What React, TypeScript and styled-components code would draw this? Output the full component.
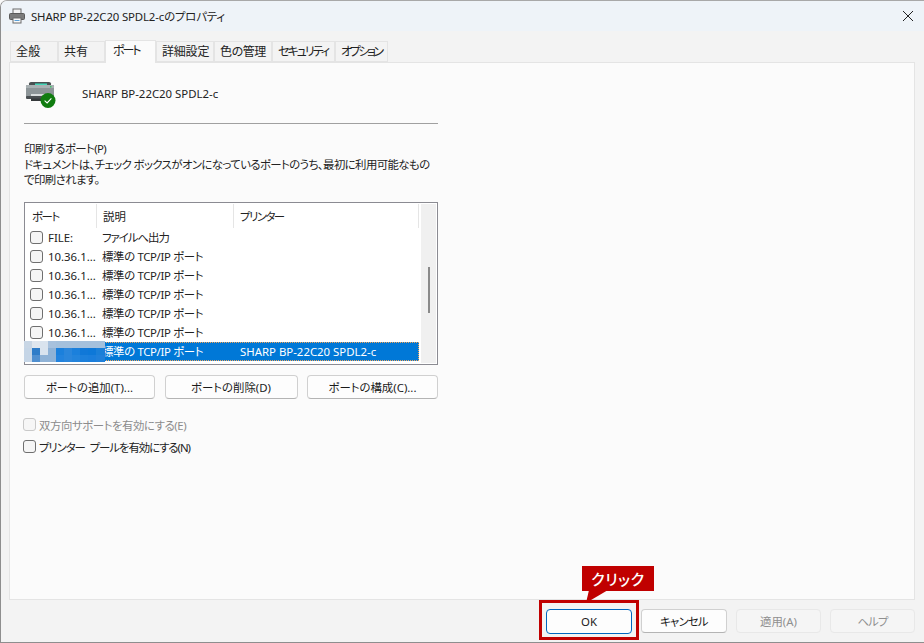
import React from "react";
import styled, { createGlobalStyle } from "styled-components";

const Global = createGlobalStyle`
  html, body { margin: 0; padding: 0; background: #f9f9f9; }
  * { box-sizing: border-box; }
  body {
    font-family: "Noto Sans", "Noto Sans CJK JP", sans-serif;
    font-size: 11.4px;
    color: #1a1a1a;
    font-feature-settings: "palt" 1;
    white-space: nowrap;
  }
`;

const Window = styled.div`
  position: relative;
  width: 924px;
  height: 643px;
  display: flex;
  flex-direction: column;
  background: #f3f3f3;
  border-left: 1px solid #8e8e8e;
  border-bottom: 1px solid #8e8e8e;
  border-top: 1px solid #a8a8a8;
  border-radius: 7px 0 0 0;
  overflow: hidden;
`;
const TitleBar = styled.div`
  height: 30px;
  flex: none;
  display: flex;
  align-items: center;
  padding: 0 8px 1px 8px;
  gap: 6px;
  background: #eef3f8;
`;
const TitleText = styled.div`
  flex: 1;
  color: #222;
  letter-spacing: -0.14px;
`;
const CloseBtn = styled.div`
  width: 14px;
  height: 14px;
  margin-right: 1px;
  display: flex;
`;
const Body = styled.div`
  flex: 1;
  display: flex;
  flex-direction: column;
  padding: 9px 8px 0 8px;
  min-height: 0;
`;
const Tabs = styled.div`
  display: flex;
  align-items: flex-end;
  height: 22px;
  flex: none;
  padding-left: 1px;
  position: relative;
  z-index: 1;
`;
const Tab = styled.div<{ $active?: boolean; $w: number; $ls: number }>`
  width: ${(p) => p.$w}px;
  height: ${(p) => (p.$active ? 23 : 21)}px;
  margin-bottom: ${(p) => (p.$active ? -1 : 0)}px;
  display: flex;
  align-items: center;
  padding-left: ${(p) => (p.$active ? 7 : 5)}px;
  padding-bottom: ${(p) => (p.$active ? 5 : 1)}px;
  background: ${(p) => (p.$active ? "#fbfbfb" : "#f3f3f3")};
  border: 1px solid #e4e4e4;
  border-bottom: ${(p) => (p.$active ? "none" : "1px solid #e4e4e4")};
  color: #222;
  font-size: 12px;
  letter-spacing: ${(p) => p.$ls}px;
`;
const Panel = styled.div`
  height: 538px;
  flex: none;
  background: #fbfbfb;
  border: 1px solid #e4e4e4;
  padding: 14px 0 0 14px;
  width: 906px;
`;
const Content = styled.div`
  width: 414px;
  display: flex;
  flex-direction: column;
`;
const PrinterHead = styled.div`
  display: flex;
  align-items: center;
  height: 33px;
  gap: 25px;
  padding-left: 1px;
`;
const PrinterName = styled.div`
  color: #222;
  margin-top: -1px;
`;
const Rule = styled.div`
  height: 1px;
  background: #a0a0a0;
  margin-top: 13px;
`;
const Description = styled.div`
  margin-top: 17px;
  line-height: 15.5px;
  color: #222;
  white-space: pre;
  letter-spacing: -0.58px;
`;
const ListBox = styled.div`
  margin-top: 14px;
  height: 163px;
  border: 1px solid #8b8b92;
  padding: 1px;
  background: #fff;
  display: flex;
`;
const ListMain = styled.div`
  width: 393px;
  display: flex;
  flex-direction: column;
  flex: none;
`;
const ListHeader = styled.div`
  display: grid;
  grid-template-columns: 71px 137px 185px;
  height: 24px;
  flex: none;
`;
const HeadCell = styled.div<{ $ls?: number }>`
  display: flex;
  align-items: center;
  padding-left: 6px;
  border-right: 1px solid #e5e5e5;
  color: #222;
  letter-spacing: ${(p) => p.$ls ?? 0}px;
`;
const Rows = styled.div`
  display: flex;
  flex-direction: column;
`;
const Row = styled.div<{ $selected?: boolean }>`
  position: relative;
  display: grid;
  grid-template-columns: 70px 137px 185px;
  height: 19px;
  align-items: center;
  color: ${(p) => (p.$selected ? "#fff" : "#222")};
  background: ${(p) => (p.$selected ? "#0078d7" : "transparent")};
  outline: ${(p) => (p.$selected ? "1px dotted #f2a65a" : "none")};
  outline-offset: -1px;
`;
const PortCell = styled.div`
  display: flex;
  align-items: center;
  padding-left: 4px;
  gap: 5px;
`;
const DescCell = styled.div<{ $ls: number }>`
  padding-left: 6px;
  letter-spacing: ${(p) => p.$ls}px;
`;
const PrinterCell = styled.div`
  padding-left: 7px;
`;
const Check = styled.span<{ $disabled?: boolean }>`
  display: inline-block;
  width: 13px;
  height: 13px;
  flex: none;
  border-radius: 3px;
  background: ${(p) => (p.$disabled ? "#f6f6f6" : "#f5f5f5")};
  border: 1px solid ${(p) => (p.$disabled ? "#c9c9c9" : "#6f6f6f")};
`;
const Mosaic = styled.svg`
  position: absolute;
  left: -2px;
  top: -1px;
`;
const ScrollTrack = styled.div`
  flex: 1;
  margin-left: 2px;
  background: #f0f0f0;
  position: relative;
`;
const ScrollThumb = styled.div`
  position: absolute;
  left: 7px;
  top: 63px;
  width: 2px;
  height: 46px;
  background: #8a8a8a;
`;
const ActionRow = styled.div`
  display: flex;
  justify-content: space-between;
  margin-top: 10px;
`;
const Button = styled.div<{ $w: number; $primary?: boolean; $disabled?: boolean; $ls?: number }>`
  width: ${(p) => p.$w}px;
  height: ${(p) => (p.$primary ? 25 : 24)}px;
  flex: none;
  display: flex;
  align-items: center;
  justify-content: center;
  border-radius: 4px;
  color: ${(p) => (p.$disabled ? "#8f8f8f" : "#1a1a1a")};
  background: ${(p) => (p.$disabled ? "#f5f5f5" : "#fdfdfd")};
  border: 1px solid ${(p) => (p.$primary ? "#0067c0" : p.$disabled ? "#e8e8e8" : "#d0d0d0")};
  border-bottom-color: ${(p) => (p.$primary ? "#0067c0" : p.$disabled ? "#e8e8e8" : "#b4b4b4")};
  letter-spacing: ${(p) => p.$ls ?? 0}px;
`;
const OptionGroup = styled.div`
  margin-top: 19px;
  margin-left: -1px;
  display: flex;
  flex-direction: column;
  gap: 8px;
`;
const Option = styled.label<{ $disabled?: boolean; $ls: number }>`
  display: flex;
  align-items: center;
  gap: 3px;
  height: 14px;
  color: ${(p) => (p.$disabled ? "#8c8c8c" : "#222")};
  letter-spacing: ${(p) => p.$ls}px;
  word-spacing: 3px;
`;
const Footer = styled.div`
  flex: 1;
  display: flex;
  justify-content: flex-end;
  align-items: flex-start;
  gap: 9px;
  padding: 9px 0 0 0;
  width: 906px;
`;
const RedBox = styled.div`
  position: absolute;
  left: 538px;
  top: 599px;
  width: 100px;
  height: 40px;
  border: 3px solid #c00000;
  pointer-events: none;
`;
const Callout = styled.div`
  position: absolute;
  left: 581px;
  top: 565px;
  width: 72px;
  height: 25px;
  background: #c00000;
  color: #fff;
  font-size: 15px;
  font-weight: 500;
  letter-spacing: 0.6px;
  display: flex;
  align-items: center;
  justify-content: center;
`;
const CalloutTail = styled.svg`
  position: absolute;
  left: 584px;
  top: 589px;
`;

const PrinterSmall = () => (
  <svg width="16" height="16" viewBox="0 0 16 16">
    <rect x="4" y="1" width="8" height="5" fill="#f4f4f4" stroke="#6a6a6a" />
    <rect x="0.5" y="5.5" width="15" height="6" rx="1" fill="#7b7b7b" stroke="#5a5a5a" />
    <rect x="4" y="10" width="8" height="5" fill="#fafafa" stroke="#6a6a6a" />
    <rect x="5.5" y="12" width="5" height="1" fill="#5aa0d8" />
  </svg>
);
const PrinterLarge = () => (
  <svg width="32" height="32" viewBox="0 0 32 32">
    <path d="M4 5.5 Q4 4 6 4 H24 Q26 4 26 5.5 V8 H4Z" fill="#4a5052" />
    <rect x="1" y="7" width="28" height="13" rx="1.5" fill="#8d9598" />
    <rect x="1" y="7" width="28" height="3" fill="#a8b0b2" />
    <rect x="10" y="5.5" width="12" height="1.5" fill="#43d6b8" />
    <rect x="25" y="8" width="1.5" height="1.5" fill="#39c464" />
    <rect x="1" y="18" width="28" height="3" rx="1" fill="#4a4f52" />
    <rect x="6" y="20.5" width="16" height="2.5" fill="#35393b" />
    <rect x="6" y="16" width="18" height="2" fill="#d8dcdd" />
    <circle cx="23" cy="22.5" r="7.5" fill="#107c10" />
    <path d="M19.6 22.7 L22.1 25 L26.4 20.4" fill="none" stroke="#fff" strokeWidth="1.1" />
  </svg>
);

const mosaicColors: string[][] = [
  ["#c8d6e5", "#dfe6ee", "#d9e3ee", "#a7c1dd", "#a4c0dc", "#a4c0dc", "#a4c0dc", "#a4c0dc", "#a4c0dc", "#a4c0dc"],
  ["#c5d5e6", "#2e7cc8", "#d9e3ee", "#8fb2d6", "#1b80dc", "#2a86dc", "#1b80dc", "#1078d8", "#0d78d8", "#1a7fd8"],
  ["#c5d5e6", "#4f8fd0", "#8fb2d6", "#8fb2d6", "#2283de", "#2a86dc", "#2384dc", "#1c80dc", "#1a7edc", "#2080da"],
];
const MosaicBlock = () => (
  <Mosaic width="81" height="21" viewBox="0 0 81 21" shapeRendering="crispEdges">
    {mosaicColors.map((r, y) =>
      r.map((c, x) => <rect key={`${x}-${y}`} x={x * 8} y={y * 7} width={x === 9 ? 9 : 8} height="7" fill={c} />)
    )}
  </Mosaic>
);

const tabs = [
  { label: "全般", w: 48, ls: 0.3 },
  { label: "共有", w: 47, ls: 0 },
  { label: "ポート", w: 51, ls: -2 },
  { label: "詳細設定", w: 58, ls: -0.2 },
  { label: "色の管理", w: 58, ls: -0.4 },
  { label: "セキュリティ", w: 63, ls: -2 },
  { label: "オプション", w: 53, ls: -2.4 },
].map((t) => ({ ...t, active: t.label === "ポート" }));
const ports = ["FILE:", "10.36.1...", "10.36.1...", "10.36.1...", "10.36.1...", "10.36.1..."];

export default function App() {
  return (
    <>
      <Global />
      <Window>
        <TitleBar>
          <PrinterSmall />
          <TitleText>SHARP BP-22C20 SPDL2-cのプロパティ</TitleText>
          <CloseBtn>
            <svg width="14" height="14" viewBox="0 0 14 14">
              <path d="M2 2 L12 12 M12 2 L2 12" stroke="#222" strokeWidth="1" />
            </svg>
          </CloseBtn>
        </TitleBar>
        <Body>
          <Tabs>
            {tabs.map((t) => (
              <Tab key={t.label} $w={t.w} $ls={t.ls} $active={t.active}>{t.label}</Tab>
            ))}
          </Tabs>
          <Panel>
            <Content>
              <PrinterHead>
                <PrinterLarge />
                <PrinterName>SHARP BP-22C20 SPDL2-c</PrinterName>
              </PrinterHead>
              <Rule />
              <Description>{"印刷するポート(P)\nドキュメントは、チェック ボックスがオンになっているポートのうち、最初に利用可能なもの\nで印刷されます。"}</Description>
              <ListBox>
                <ListMain>
                  <ListHeader>
                    <HeadCell $ls={-1.4}>ポート</HeadCell>
                    <HeadCell>説明</HeadCell>
                    <HeadCell $ls={-1.5}>プリンター</HeadCell>
                  </ListHeader>
                  <Rows>
                    {ports.map((p, i) => (
                      <Row key={i}>
                        <PortCell><Check />{p}</PortCell>
                        <DescCell $ls={i === 0 ? -1 : -0.33}>{i === 0 ? "ファイルへ出力" : "標準の TCP/IP ポート"}</DescCell>
                        <PrinterCell />
                      </Row>
                    ))}
                    <Row $selected>
                      <PortCell />
                      <DescCell $ls={-0.33}>標準の TCP/IP ポート</DescCell>
                      <PrinterCell>SHARP BP-22C20 SPDL2-c</PrinterCell>
                      <MosaicBlock />
                    </Row>
                  </Rows>
                </ListMain>
                <ScrollTrack><ScrollThumb /></ScrollTrack>
              </ListBox>
              <ActionRow>
                <Button $w={131}>ポートの追加(T)...</Button>
                <Button $w={133}>ポートの削除(D)</Button>
                <Button $w={131}>ポートの構成(C)...</Button>
              </ActionRow>
              <OptionGroup>
                <Option $disabled $ls={-0.42}><Check $disabled />双方向サポートを有効にする(E)</Option>
                <Option $ls={-1.05}><Check />プリンター プールを有効にする(N)</Option>
              </OptionGroup>
            </Content>
          </Panel>
          <Footer>
            <Button $w={86} $primary>OK</Button>
            <Button $w={86} $ls={-0.8}>キャンセル</Button>
            <Button $w={85} $disabled>適用(A)</Button>
            <Button $w={85} $disabled $ls={-0.8}>ヘルプ</Button>
          </Footer>
        </Body>
        <RedBox />
        <Callout>クリック</Callout>
        <CalloutTail width="24" height="14" viewBox="0 0 24 14"><path d="M4 0 H23 L1 13 Z" fill="#c00000" /></CalloutTail>
      </Window>
    </>
  );
}
